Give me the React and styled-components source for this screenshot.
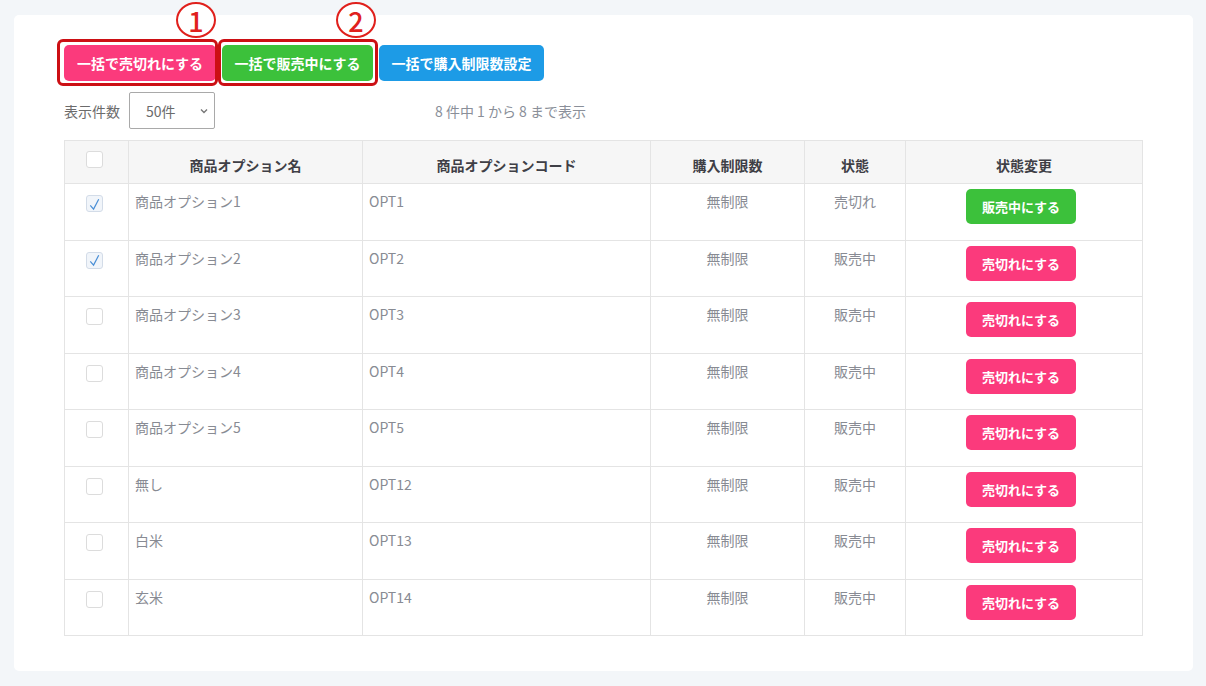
import React, { useState } from "react";
import styled, { createGlobalStyle } from "styled-components";

const GlobalStyle = createGlobalStyle`
  html, body {
    margin: 0;
    padding: 0;
    background: #f3f6f9;
    font-family: "Noto Sans CJK JP", "Noto Sans", sans-serif;
  }
  * { box-sizing: border-box; }
`;

const rows = [
  { name: "商品オプション1", code: "OPT1", soldOut: true, checked: true },
  { name: "商品オプション2", code: "OPT2", soldOut: false, checked: true },
  { name: "商品オプション3", code: "OPT3", soldOut: false },
  { name: "商品オプション4", code: "OPT4", soldOut: false },
  { name: "商品オプション5", code: "OPT5", soldOut: false },
  { name: "無し", code: "OPT12", soldOut: false },
  { name: "白米", code: "OPT13", soldOut: false },
  { name: "玄米", code: "OPT14", soldOut: false },
];

const COLORS = {
  pink: "#fb3a7c",
  green: "#3cc13b",
  blue: "#1d9be6",
};

export default function App() {
  const [items, setItems] = useState(rows);

  const toggle = (i) => {
    setItems(items.map((r, idx) => (idx === i ? { ...r, checked: !r.checked } : r)));
  };

  return (
    <>
      <GlobalStyle />
      <Page>
        <Card>
          <Toolbar>
            <Marked>
              <Highlight $l={-7} $r={-2} />
              <Marker $left={112}>1</Marker>
              <Button $color={COLORS.pink} $w={152}>一括で売切れにする</Button>
            </Marked>
            <Marked>
              <Highlight $l={-4} $r={-5} />
              <Marker $left={114}>2</Marker>
              <Button $color={COLORS.green} $w={151}>一括で販売中にする</Button>
            </Marked>
            <Button $color={COLORS.blue} $w={165}>一括で購入制限数設定</Button>
          </Toolbar>

          <FilterRow>
            <Label>表示件数</Label>
            <SelectBox>
              <span>50件</span>
              <svg width="10" height="10" viewBox="0 0 10 10">
                <path d="M2 3.5 L5 6.5 L8 3.5" fill="none" stroke="#777" strokeWidth="1.4" />
              </svg>
            </SelectBox>
            <Info>8 件中 1 から 8 まで表示</Info>
          </FilterRow>

          <Table>
            <colgroup>
              <col style={{ width: 64 }} />
              <col style={{ width: 234 }} />
              <col style={{ width: 288 }} />
              <col style={{ width: 154 }} />
              <col style={{ width: 101 }} />
              <col style={{ width: 237 }} />
            </colgroup>
            <thead>
              <tr>
                <CheckHead>
                  <Check />
                </CheckHead>
                <Th>商品オプション名</Th>
                <Th>商品オプションコード</Th>
                <Th>購入制限数</Th>
                <Th>状態</Th>
                <Th>状態変更</Th>
              </tr>
            </thead>
            <tbody>
              {items.map((r, i) => (
                <Tr key={r.code}>
                  <CheckCell>
                    <Check $checked={r.checked} onClick={() => toggle(i)}>
                      {r.checked && (
                        <svg width="16" height="16" viewBox="0 0 16 16">
                          <path d="M3.5 9.5 L7 13.5 L12.5 3" fill="none" stroke="#4a8fd6" strokeWidth="1.3" />
                        </svg>
                      )}
                    </Check>
                  </CheckCell>
                  <Td>{r.name}</Td>
                  <Td>{r.code}</Td>
                  <Td $center>無制限</Td>
                  <Td $center>{r.soldOut ? "売切れ" : "販売中"}</Td>
                  <ActionCell>
                    {r.soldOut ? (
                      <SmallButton $color={COLORS.green}>販売中にする</SmallButton>
                    ) : (
                      <SmallButton $color={COLORS.pink}>売切れにする</SmallButton>
                    )}
                  </ActionCell>
                </Tr>
              ))}
            </tbody>
          </Table>
        </Card>
      </Page>
    </>
  );
}

const Page = styled.div`
  width: 1206px;
  height: 686px;
  padding: 15px 13px 15px 14px;
`;

const Card = styled.div`
  width: 1179px;
  height: 656px;
  background: #ffffff;
  border-radius: 5px;
  padding: 30px 51px 0 50px;
`;

const Toolbar = styled.div`
  display: flex;
  gap: 6px;
  height: 36px;
`;

const Marked = styled.div`
  position: relative;
  display: flex;
`;

const Highlight = styled.div`
  position: absolute;
  top: -6px;
  bottom: -5px;
  left: ${(p) => p.$l}px;
  right: ${(p) => p.$r}px;
  border: 3px solid #cc0f14;
  border-radius: 6px;
  pointer-events: none;
`;

const Marker = styled.div`
  position: absolute;
  top: -43px;
  left: ${(p) => p.$left}px;
  width: 40px;
  height: 36px;
  border: 2px solid #e0201c;
  border-radius: 50%;
  display: flex;
  align-items: center;
  justify-content: center;
  color: #e0201c;
  font-size: 27px;
  font-weight: 500;
  line-height: 1;
  background: #ffffff;
`;

const Button = styled.button`
  width: ${(p) => p.$w}px;
  height: 36px;
  border: none;
  border-radius: 5px;
  background: ${(p) => p.$color};
  color: #ffffff;
  font-family: inherit;
  font-size: 14px;
  font-weight: 700;
  padding: 0;
  cursor: pointer;
`;

const FilterRow = styled.div`
  display: flex;
  align-items: center;
  margin-top: 11px;
  height: 37px;
`;

const Label = styled.span`
  color: #6b6b6b;
  font-size: 14px;
  width: 65px;
`;

const SelectBox = styled.div`
  width: 86px;
  height: 37px;
  border: 1px solid #a9a9a9;
  border-radius: 2px;
  display: flex;
  align-items: center;
  justify-content: space-between;
  padding: 0 5px 0 16px;
  color: #6b6b6b;
  font-size: 14px;
`;

const Info = styled.span`
  margin-left: 220px;
  color: #8a8f99;
  font-size: 14px;
`;

const Table = styled.table`
  margin-top: 11px;
  width: 1078px;
  border-collapse: collapse;
  table-layout: fixed;
  font-size: 14px;
`;

const Th = styled.th`
  height: 43px;
  background: #f6f6f6;
  border: 1px solid #e4e4e4;
  color: #3f3f46;
  font-weight: 700;
  vertical-align: bottom;
  padding: 0 7px 8px;
  line-height: 20px;
  text-align: center;
`;

const CheckHead = styled(Th)`
  vertical-align: top;
  padding: 10px 0 0 21px;
  text-align: left;
`;

const Tr = styled.tr`
  height: 56.5px;
`;

const Td = styled.td`
  border: 1px solid #e4e4e4;
  color: #888b93;
  vertical-align: top;
  padding: 7px 6px;
  line-height: 20px;
  text-align: ${(p) => (p.$center ? "center" : "left")};
`;

const CheckCell = styled(Td)`
  padding: 11px 0 0 21px;
`;

const ActionCell = styled(Td)`
  text-align: center;
  padding: 5px 6px 0 0;
`;

const Check = styled.span`
  display: flex;
  align-items: center;
  justify-content: center;
  width: 17px;
  height: 17px;
  border: 1px solid ${(p) => (p.$checked ? "#d3dce8" : "#dcdcdc")};
  border-radius: 3px;
  background: ${(p) => (p.$checked ? "#f1f5fa" : "#ffffff")};
  cursor: pointer;
`;

const SmallButton = styled.button`
  width: 110px;
  height: 35px;
  border: none;
  border-radius: 5px;
  background: ${(p) => p.$color};
  color: #ffffff;
  font-family: inherit;
  font-size: 13px;
  font-weight: 700;
  padding: 0;
  cursor: pointer;
`;
